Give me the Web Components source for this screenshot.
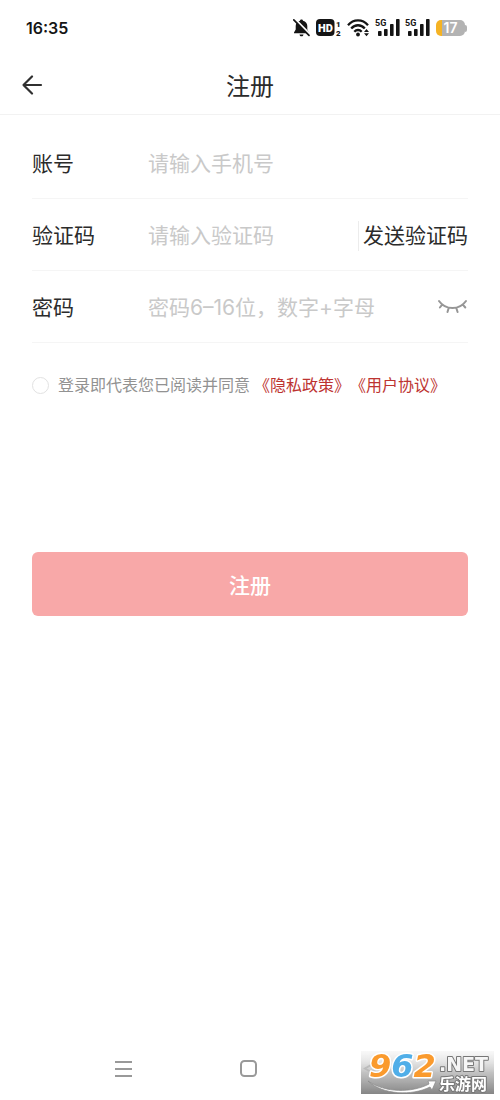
<!DOCTYPE html>
<html lang="zh-CN">
<head>
<meta charset="utf-8">
<meta name="viewport" content="width=device-width, initial-scale=1">
<title>注册</title>
<style>
  body { margin: 0; background: #fff; color: #2b2b2b; font-family: Inter, "Noto Sans CJK SC", sans-serif; }
</style>
</head>
<body>
<register-page></register-page>
<script>
const define = (name, html, setup) => {
  const template = document.createElement('template');
  template.innerHTML = html;
  customElements.define(name, class extends HTMLElement {
    connectedCallback() {
      if (this.shadowRoot) return;
      this.attachShadow({ mode: 'open' }).append(template.content.cloneNode(true));
      if (setup) setup(this, this.shadowRoot);
    }
  });
};

define('signal-bars', `
<style>
  :host { display: block; width: 24px; height: 20px; }
  svg { display: block; overflow: visible; }
  text { font: 700 9px Roboto, sans-serif; fill: #151515; }
</style>
<svg width="24" height="20" viewBox="0 0 24 20" fill="#151515">
  <text x="-1" y="8">5G</text>
  <rect x="2" y="13" width="3.6" height="5" rx=".8"/><rect x="8" y="11" width="3.6" height="7" rx=".8"/>
  <rect x="14" y="6" width="3.6" height="12" rx=".8"/><rect x="20" y="1" width="3.6" height="17" rx=".8"/>
</svg>`);

define('battery-level', `
<style>
  :host { display: flex; align-items: center; }
  .cell { width: 29px; height: 16px; border-radius: 5px; text-align: center;
    background: linear-gradient(90deg, #f5b324 6px, #b3b3b3 6px);
    color: #fff; font: 600 14px/16px Inter, sans-serif; }
  .cap { width: 2px; height: 7px; border-radius: 0 2px 2px 0; background: #b3b3b3; }
</style>
<div class="cell"><slot></slot></div><div class="cap"></div>`);

define('status-bar', `
<style>
  :host { display: flex; align-items: center; justify-content: space-between; height: 56px; padding: 0 33px 0 26px; color: #151515; }
  time { font: 600 16px/20px Inter, sans-serif; }
  .icons { display: flex; align-items: center; gap: 6px; }
  svg { display: block; }
  text { font-family: Roboto, sans-serif; font-weight: 900; }
</style>
<time datetime="16:35">16:35</time>
<div class="icons">
  <svg width="17" height="20" viewBox="0 0 17 20" fill="#151515">
    <path d="M8.500 1.500c.8 0 1.400.5 1.500 1.300 2.800.7 4.300 2.700 4.300 5.200v3.500l1.700 3v.8H1v-.8l1.700-3V8c0-2.500 1.500-4.500 4.300-5.200.1-.8.7-1.300 1.500-1.300zM6.500 16.400h4c-.2 1.200-.9 1.900-2 1.900s-1.800-.7-2-1.900z"/>
    <path d="M1.500.5 18 17.300" stroke="#fff" stroke-width="2"/>
    <path d="M.8 1.800 16 17.300" stroke="#151515" stroke-width="1.700" stroke-linecap="round"/>
  </svg>
  <svg width="25" height="20" viewBox="0 0 25 20" fill="#151515">
    <rect y="1" width="18.500" height="17" rx="4"/>
    <text x="2" y="13.500" font-size="11" fill="#fff">HD</text>
    <text x="20" y="8.500" font-size="8">1</text><text x="20" y="18" font-size="8">2</text>
  </svg>
  <svg width="23" height="20" viewBox="0 0 23 20" fill="none" stroke="#151515" stroke-width="2.300">
    <path d="M1 7.200C6.500.8 15.500.8 21 7.200M4.200 10.600c3.900-4.500 9.700-4.500 13.600 0M7.300 13.800c2.200-2.400 5.200-2.400 7.400 0"/>
    <circle cx="11" cy="16.500" r="1.900" fill="#151515" stroke="none"/>
    <path d="m19.500 11 2.500 3h-5zM19.500 18.300l2.500-3h-5z" fill="#151515" stroke="none"/>
  </svg>
  <signal-bars></signal-bars>
  <signal-bars></signal-bars>
  <battery-level>17</battery-level>
</div>`);

define('page-header', `
<style>
  :host { display: grid; grid-template-columns: 1fr auto 1fr; align-items: center; height: 58px; padding: 0 20px; border-bottom: 1px solid #f2f2f2; }
  button { display: block; justify-self: start; width: 24px; height: 24px; padding: 0; border: 0; background: none; }
  svg { display: block; }
  h1 { margin: 0; padding-top: 4px; font-size: 24px; line-height: 36px; font-weight: 400; }
</style>
<button type="button" aria-label="返回"><svg width="24" height="24" viewBox="0 0 24 24" fill="none" stroke="#303030" stroke-width="2.200" stroke-linecap="round" stroke-linejoin="round"><path d="M21 12H3.500M12 3.500 3.500 12l8.500 8.500"/></svg></button>
<h1><slot></slot></h1>`);

define('form-field', `
<style>
  :host { display: flex; box-sizing: border-box; align-items: center; height: 72px; padding-top: 3px; border-bottom: 1px solid #f5f5f5; font-size: 21px; line-height: 32px; }
  label { flex: none; width: 116px; }
  input { flex: 1; min-width: 0; height: 32px; padding: 0; border: 0; outline: 0; background: none; color: inherit; font: inherit; }
  input::placeholder { color: #c9c9c9; opacity: 1; }
</style>
<label for="field"></label><input id="field"><slot></slot>`, (host, root) => {
  root.querySelector('label').textContent = host.getAttribute('label');
  const input = root.querySelector('input');
  input.type = host.getAttribute('type') || 'text';
  input.placeholder = host.getAttribute('hint');
});

define('send-code', `
<style>
  :host { display: block; border-left: 1px solid #ececec; }
  button { display: block; height: 30px; padding: 0 0 0 4px; border: 0; background: none; color: #2b2b2b; font: inherit; line-height: 30px; }
</style>
<button type="button"><slot></slot></button>`);

define('reveal-toggle', `
<style>
  :host { display: block; }
  button { display: block; padding: 0; border: 0; background: none; }
  svg { display: block; }
</style>
<button type="button" aria-label="显示密码"><svg width="31" height="20" viewBox="0 0 31 20" fill="none" stroke="#969696" stroke-width="2" stroke-linecap="round"><path d="M2 3c6.500 9.300 20.500 9.300 27 0M5.200 6.600 2.900 9.500M25.800 6.600l2.500 2.900M11.600 10.200 10.500 14M19.400 10.200l1.200 3.800"/></svg></button>`);

define('consent-line', `
<style>
  :host { display: flex; align-items: center; padding-top: 30px; font-size: 16px; line-height: 24px; color: #929292; }
  input { appearance: none; flex: none; box-sizing: border-box; width: 17px; height: 17px; margin: 0 9px 0 0; border: 1px solid #e2e2e2; border-radius: 50%; }
  input:checked { background: #c2302e; }
  label { margin-right: 4px; }
  a { color: #bd3431; text-decoration: none; }
</style>
<input type="checkbox" id="agree"><label for="agree">登录即代表您已阅读并同意</label><a href="#privacy">《隐私政策》</a><a href="#terms">《用户协议》</a>`);

define('submit-button', `
<style>
  :host { display: block; }
  button { display: block; width: 100%; height: 64px; padding: 0; border: 0; border-radius: 6px; background: #f8a8a8; color: #fff; font: inherit; font-size: 21px; font-weight: 500; }
</style>
<button type="submit"><slot></slot></button>`);

define('system-nav', `
<style>
  :host { display: grid; grid-template-columns: repeat(3, 1fr); justify-items: center; align-items: center; height: 62px; padding: 0 13% 0 12%; }
  button { display: block; padding: 0; border: 0; background: none; }
  svg { display: block; fill: none; stroke: #999; stroke-width: 2; }
</style>
<button type="button" aria-label="菜单"><svg width="20" height="20"><path d="M2 3h17M2 10h17M2 17h17"/></svg></button>
<button type="button" aria-label="主页"><svg width="20" height="20"><rect x="3" y="2" width="15" height="15" rx="3.500"/></svg></button>
<button type="button" aria-label="返回"><svg width="20" height="20"><path d="M15 2 2 9.500 15 17z"/></svg></button>`);

define('site-mark', `
<style>
  :host { display: block; position: fixed; right: 6px; bottom: 6px; }
  svg { display: block; }
  text { paint-order: stroke; stroke-linejoin: round; }
  .digits { font: italic 700 32px "DejaVu Sans", sans-serif; stroke: #fff; stroke-width: 3px; }
  .net { font: 700 19px "DejaVu Sans", sans-serif; fill: #f6f6f6; stroke: #777; stroke-width: 2px; }
  .name { font: 700 16px "Noto Sans CJK SC", sans-serif; fill: #fff; stroke: #777; stroke-width: 2px; }
</style>
<svg width="133" height="53" viewBox="0 -10 133 53" role="img" aria-label="962.NET 乐游网">
  <defs>
    <linearGradient id="shade" x2="0" y2="1"><stop stop-color="#e8e8e8" stop-opacity=".3"/><stop offset=".5" stop-color="#bcbcbc" stop-opacity=".9"/><stop offset="1" stop-color="#858585"/></linearGradient>
  </defs>
  <rect width="133" height="43" fill="url(#shade)"/>
  <path d="M7 30c17 12 44 12 61 3l-1-3 8 0-4 9-2-3C51 45 22 44 7 30z" fill="#fff" stroke="#888" stroke-width=".7"/>
  <text class="digits" x="8" y="26"><tspan fill="#fa9a2d">9</tspan><tspan fill="#50aee8">6</tspan><tspan fill="#fa9a2d">2</tspan></text>
  <text class="net" x="78" y="20">.NET</text>
  <text class="name" x="78" y="39">乐游网</text>
</svg>`);

define('register-page', `
<style>
  :host { display: flex; flex-direction: column; min-height: 100vh; }
  main { flex: 1; padding: 12px 32px 0; }
  submit-button { margin-top: 155px; }
</style>
<status-bar></status-bar>
<page-header>注册</page-header>
<main>
  <form>
    <form-field label="账号" type="tel" hint="请输入手机号"></form-field>
    <form-field label="验证码" hint="请输入验证码"><send-code>发送验证码</send-code></form-field>
    <form-field label="密码" type="password" hint="密码6–16位，数字+字母"><reveal-toggle></reveal-toggle></form-field>
    <consent-line></consent-line>
    <submit-button>注册</submit-button>
  </form>
</main>
<system-nav></system-nav>
<site-mark></site-mark>`);
</script>
</body>
</html>
